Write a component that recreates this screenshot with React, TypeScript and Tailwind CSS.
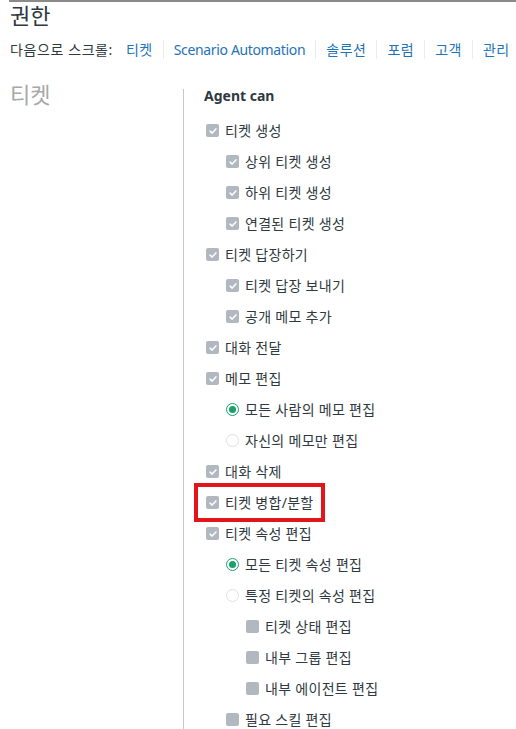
type Kind = 'check' | 'box' | 'radioOn' | 'radioOff'

interface Item {
  label: string
  level: number
  kind: Kind
  marked?: boolean
}

const items: Item[] = [
  { label: '티켓 생성', level: 0, kind: 'check' },
  { label: '상위 티켓 생성', level: 1, kind: 'check' },
  { label: '하위 티켓 생성', level: 1, kind: 'check' },
  { label: '연결된 티켓 생성', level: 1, kind: 'check' },
  { label: '티켓 답장하기', level: 0, kind: 'check' },
  { label: '티켓 답장 보내기', level: 1, kind: 'check' },
  { label: '공개 메모 추가', level: 1, kind: 'check' },
  { label: '대화 전달', level: 0, kind: 'check' },
  { label: '메모 편집', level: 0, kind: 'check' },
  { label: '모든 사람의 메모 편집', level: 1, kind: 'radioOn' },
  { label: '자신의 메모만 편집', level: 1, kind: 'radioOff' },
  { label: '대화 삭제', level: 0, kind: 'check' },
  { label: '티켓 병합/분할', level: 0, kind: 'check', marked: true },
  { label: '티켓 속성 편집', level: 0, kind: 'check' },
  { label: '모든 티켓 속성 편집', level: 1, kind: 'radioOn' },
  { label: '특정 티켓의 속성 편집', level: 1, kind: 'radioOff' },
  { label: '티켓 상태 편집', level: 2, kind: 'box' },
  { label: '내부 그룹 편집', level: 2, kind: 'box' },
  { label: '내부 에이전트 편집', level: 2, kind: 'box' },
  { label: '필요 스킬 편집', level: 1, kind: 'box' },
]

const links = ['티켓', 'Scenario Automation', '솔루션', '포럼', '고객', '관리']

const indent = ['pl-[2px]', 'pl-[22px]', 'pl-[42px]']

const Control = ({ kind }: { kind: Kind }) => {
  if (kind === 'check') {
    return (
      <span className="w-[13px] h-[13px] rounded-[2px] bg-[#b1b8bf] flex items-center justify-center shrink-0">
        <svg viewBox="0 0 12 12" className="w-[10px] h-[10px]">
          <path d="M2.5 6.2 L5 8.5 L9.5 3.5" fill="none" stroke="#fff" strokeWidth="1.8" strokeLinecap="round" strokeLinejoin="round" />
        </svg>
      </span>
    )
  }
  if (kind === 'box') {
    return <span className="w-[13px] h-[13px] rounded-[2px] bg-[#b1b8bf] shrink-0" />
  }
  if (kind === 'radioOn') {
    return (
      <span className="w-[13px] h-[13px] rounded-full border-[1.5px] border-[#1aa06d] flex items-center justify-center shrink-0">
        <span className="w-[7px] h-[7px] rounded-full bg-[#1aa06d]" />
      </span>
    )
  }
  return <span className="w-[13px] h-[13px] rounded-full border border-[#dde0e3] bg-white shrink-0" />
}

export default function App() {
  return (
    <div className="w-[516px] h-[729px] overflow-hidden bg-white text-[#2f3941] font-['Noto_Sans','Noto_Sans_CJK_KR',sans-serif]">
      <div className="ml-[9px] h-[2px] bg-[#8a8a8a]" />
      <div className="pl-[10px]">
        <h1 className="text-[22px] leading-[26px] font-normal">권한</h1>
        <div className="mt-[6px] flex items-center h-[30px] text-[14px] whitespace-nowrap">
          <span className="mr-[3px] tracking-[0.6px]">다음으로 스크롤:</span>
          {links.map((l, i) => (
            <span
              key={l}
              className={`px-[10px] text-[#1f73b7] leading-[19px] ${i > 0 ? 'border-l border-[#e9ebed]' : ''} ${l.startsWith('S') ? 'tracking-[-0.35px]' : 'tracking-[0.5px]'}`}
            >
              {l}
            </span>
          ))}
        </div>
      </div>

      <div className="flex mt-[25px] pl-[10px]">
        <div className="w-[173px] shrink-0">
          <div className="text-[22px] leading-[16px] mt-[-3px] text-[#a8a8a8]">티켓</div>
        </div>
        <div className="border-l border-[#c8c8c8] pl-[20px] h-[700px]">
          <div className="text-[14px] font-bold leading-[16px] mt-[-1px]">Agent can</div>
          <div className="mt-[11px]">
            {items.map((it) => (
              <div
                key={it.label}
                className={`h-[31px] flex items-center text-[14px] ${indent[it.level]}`}
              >
                <div className="relative flex items-center gap-[6px]">
                  {it.marked && (
                    <span className="absolute left-[-12px] top-[-11px] w-[131px] h-[39px] border-[4px] border-[#e3151a]" />
                  )}
                  <Control kind={it.kind} />
                  <span className="leading-[17px] tracking-[0.3px]">{it.label}</span>
                </div>
              </div>
            ))}
          </div>
        </div>
      </div>
    </div>
  )
}
